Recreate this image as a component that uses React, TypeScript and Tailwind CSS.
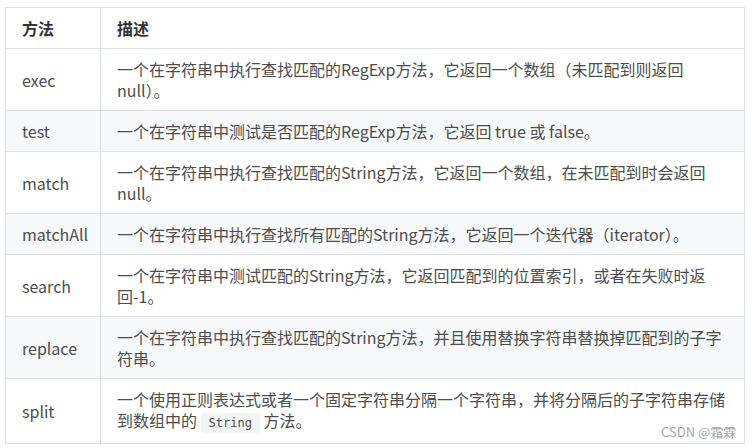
import React from "react";

type Row = { name: string; desc: React.ReactNode; gray: boolean; two: boolean };

const rows: Row[] = [
  {
    name: "exec",
    desc: (
      <>
        一个在字符串中执行查找匹配的RegExp方法，它返回一个数组（未匹配到则返回
        <br />
        null）。
      </>
    ),
    gray: false,
    two: true,
  },
  {
    name: "test",
    desc: <>一个在字符串中测试是否匹配的RegExp方法，它返回 true 或 false。</>,
    gray: true,
    two: false,
  },
  {
    name: "match",
    desc: (
      <>
        一个在字符串中执行查找匹配的String方法，它返回一个数组，在未匹配到时会返回
        <br />
        null。
      </>
    ),
    gray: false,
    two: true,
  },
  {
    name: "matchAll",
    desc: <>一个在字符串中执行查找所有匹配的String方法，它返回一个迭代器（iterator）。</>,
    gray: true,
    two: false,
  },
  {
    name: "search",
    desc: (
      <>
        一个在字符串中测试匹配的String方法，它返回匹配到的位置索引，或者在失败时返
        <br />
        回-1。
      </>
    ),
    gray: false,
    two: true,
  },
  {
    name: "replace",
    desc: (
      <>
        一个在字符串中执行查找匹配的String方法，并且使用替换字符串替换掉匹配到的子字
        <br />
        符串。
      </>
    ),
    gray: true,
    two: true,
  },
  {
    name: "split",
    desc: (
      <>
        一个使用正则表达式或者一个固定字符串分隔一个字符串，并将分隔后的子字符串存储
        <br />
        到数组中的{" "}
        <code className="rounded-[4px] bg-[#f3f4f4] px-[8px] py-[3px] text-[12px] text-[#4d4d4d] [font-family:'DejaVu_Sans_Mono','Liberation_Mono',monospace]">
          String
        </code>{" "}
        方法。
      </>
    ),
    gray: false,
    two: true,
  },
];

export default function App() {
  return (
    <div className="relative h-[448px] w-[753px] bg-white pl-[5px] pt-[7px] [font-family:'Noto_Sans_CJK_SC','Noto_Sans',sans-serif]">
      <table className="w-[740px] table-fixed border-collapse text-[16px] leading-[21px] text-[#4d4d4d]">
        <colgroup>
          <col className="w-[95px]" />
          <col />
        </colgroup>
        <thead>
          <tr className="bg-white">
            <th className="border border-[#dfe2e5] pb-[9px] pl-[16px] pt-[10px] text-left font-bold text-[#333]">
              方法
            </th>
            <th className="border border-[#dfe2e5] pb-[9px] pl-[16px] pt-[10px] text-left font-bold text-[#333]">
              描述
            </th>
          </tr>
        </thead>
        <tbody>
          {rows.map((r) => (
            <tr key={r.name} className={r.gray ? "bg-[#f6f8fa]" : "bg-white"}>
              <td className="border border-[#dfe2e5] pb-[9px] pl-[16px] pt-[10px] align-middle whitespace-nowrap">
                {r.name}
              </td>
              <td className="border border-[#dfe2e5] pb-[9px] pl-[16px] pr-[8px] pt-[10px] align-middle whitespace-nowrap">
                {r.desc}
              </td>
            </tr>
          ))}
        </tbody>
      </table>
      <div className="absolute left-[661px] top-[424px] text-[13px] leading-[16px] text-[#a8a8a8]">
        CSDN @霜霖
      </div>
    </div>
  );
}
